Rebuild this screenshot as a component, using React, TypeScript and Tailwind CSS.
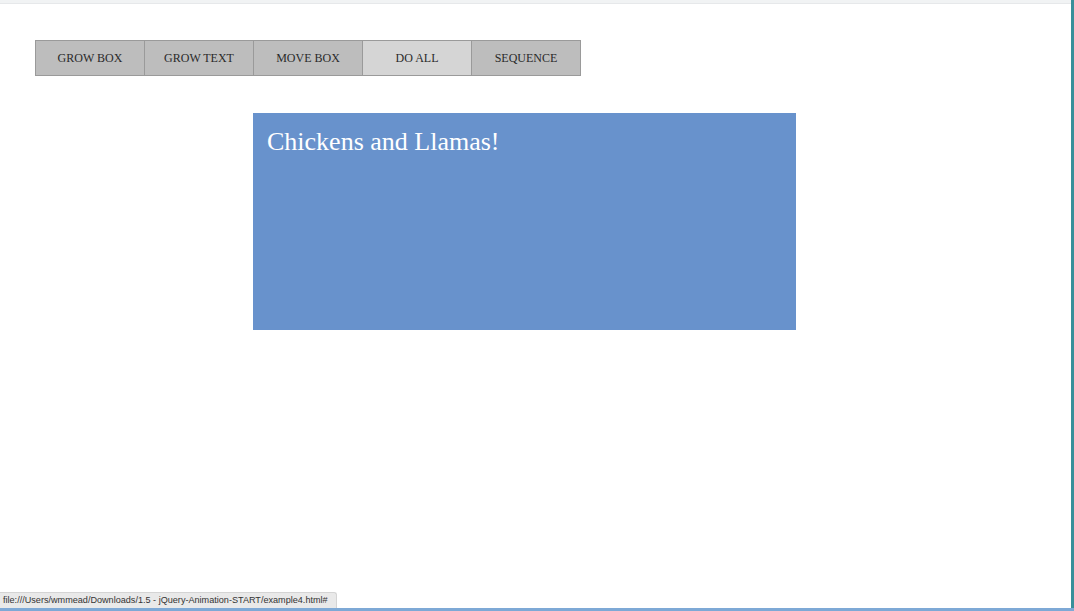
import React from 'react';

const buttons = ['GROW BOX', 'GROW TEXT', 'MOVE BOX', 'DO ALL', 'SEQUENCE'];

export default function App() {
    return (
        <div className="relative w-[1074px] h-[611px] bg-[#f1f3f4] overflow-hidden">
            {/* page viewport */}
            <div className="w-[1071px] h-[608px] bg-white border-t-[1px] border-t-[#e6e8ea] mt-[3px] flex flex-col">
                <div className="flex ml-[35px] mt-[36px]">
                    {buttons.map((label) => (
                        <button
                            key={label}
                            className={`w-[110px] h-[36px] border border-[#9a9a9a] -ml-px first:ml-0 text-[12px] text-[#2a2a2a] font-['Liberation_Serif',serif] ${
                                label === 'DO ALL' ? 'bg-[#d5d5d5]' : 'bg-[#bdbdbd]'
                            }`}
                        >
                            {label}
                        </button>
                    ))}
                </div>

                <div className="ml-[253px] mt-[37px] w-[543px] h-[217px] bg-[#6892cc] px-[14px] pt-[12px]">
                    <h1 className="text-white text-[26px] leading-[34px] font-['Liberation_Serif',serif]">
                        Chickens and Llamas!
                    </h1>
                </div>
            </div>

            {/* right window edge */}
            <div className="absolute top-0 right-0 w-[3px] h-full bg-[#3a8f9a]" />
            {/* bottom window edge */}
            <div className="absolute bottom-0 left-0 w-full h-[3px] bg-[#7ea9d6]" />

            {/* status bubble */}
            <div className="absolute left-0 bottom-[3px] h-[16px] w-[337px] bg-[#e9e9e9] border-t border-r border-[#d4d4d4] rounded-tr-[3px] px-[3px] text-[9.1px] leading-[15px] text-[#333] font-['Liberation_Sans',sans-serif] whitespace-nowrap">
                file:///Users/wmmead/Downloads/1.5 - jQuery-Animation-START/example4.html#
            </div>
        </div>
    );
}
